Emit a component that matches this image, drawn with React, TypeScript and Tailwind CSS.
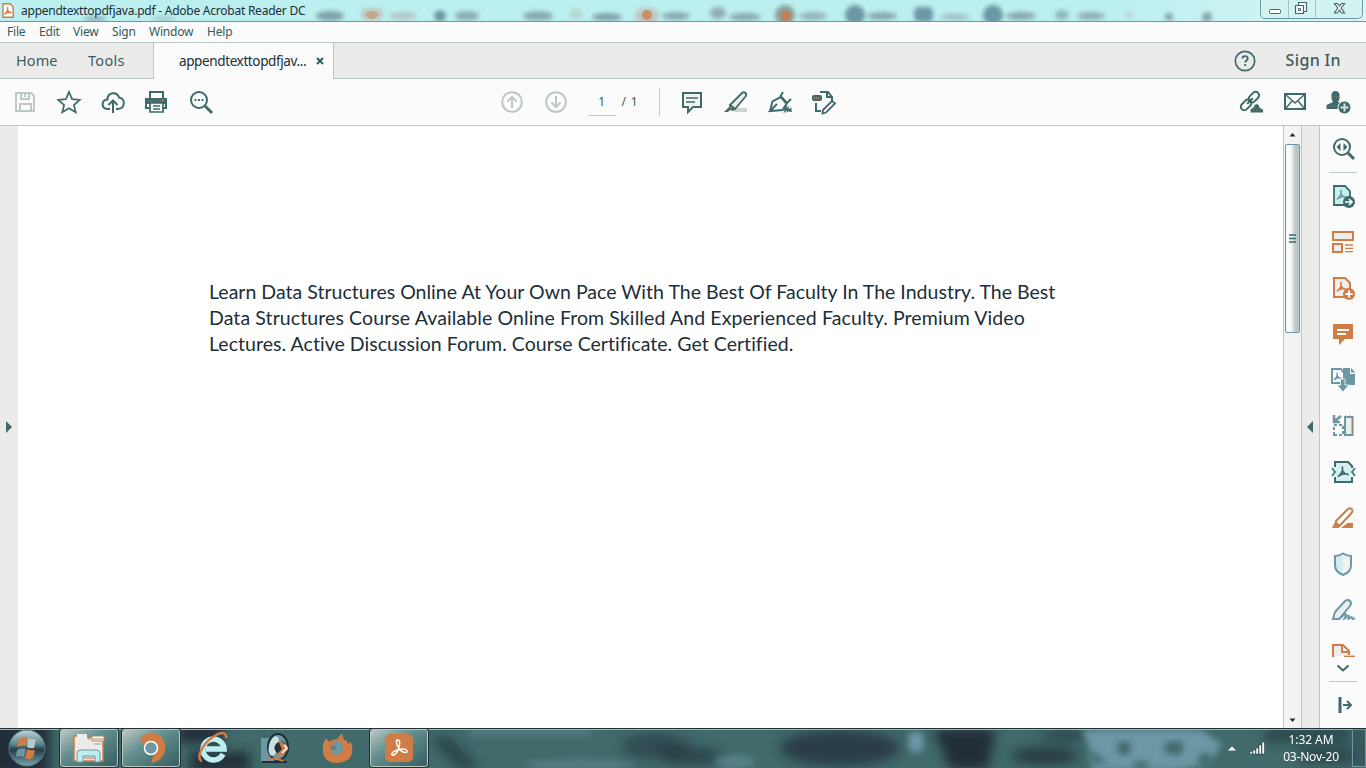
import type { ReactNode } from "react";

function Icon({ children, h = 24, w = 24, color = "text-[#3f6a6b]" }: { children: ReactNode; h?: number; w?: number; color?: string }) {
  return (
    <svg width={w} height={h} viewBox={`0 0 ${w} ${h}`} fill="none" stroke="currentColor" strokeWidth="2" className={`block shrink-0 overflow-visible ${color}`}>
      {children}
    </svg>
  );
}

const PDF_MARK = "M-.5 -5V-1.500Q-.5 .5 -4.500 4.500M-.5 -1Q1 2 5 2.500M-3 3Q0 1.200 5 2";

function TitleBar() {
  const blobs: [number, number, number, number, string][] = [
    [330, 16, 14, 5, "#7ea1ab"], [403, 16, 14, 4, "#b2c9c7"], [467, 16, 12, 5, "#8dafb6"], [538, 16, 15, 5, "#8aabb3"],
    [576, 14, 6, 5, "#b6d5d2"], [607, 17, 15, 4, "#7fa3ad"], [676, 16, 14, 4, "#8aabb3"], [745, 17, 16, 4, "#8aabb3"],
    [813, 16, 14, 4, "#94b4b9"], [882, 16, 15, 4, "#86a8b1"], [955, 17, 15, 3, "#a0bdc0"], [1021, 16, 15, 4, "#86a8b1"],
    [1091, 16, 14, 4, "#91b1b7"], [1129, 15, 4, 3, "#b8d4d1"], [95, 19, 12, 3, "#8fb6bc"], [163, 19, 12, 3, "#a4cdcf"],
  ];
  return (
    <header className="relative flex h-[22px] shrink-0 items-center overflow-hidden border-b border-[#6c97a5] bg-[#bcefef]">
      <svg width="1366" height="21" className="absolute inset-0">
        <defs>
          <filter id="soft" x="-30%" y="-50%" width="160%" height="200%"><feGaussianBlur stdDeviation="2" /></filter>
          <linearGradient id="glass" x1="0" x2="1"><stop offset="0" stopColor="#fff" stopOpacity="0" /><stop offset="1" stopColor="#fff" stopOpacity=".45" /></linearGradient>
        </defs>
        <rect x="1120" width="246" height="21" fill="url(#glass)" />
        <g filter="url(#soft)">
          {blobs.map(([x, y, rx, ry, c]) => <ellipse key={x} cx={x} cy={y} rx={rx} ry={ry} fill={c} />)}
          <rect x="361" y="8" width="22" height="12" rx="5" fill="#bcc8c4" />
          <circle cx="440" cy="16" r="6" fill="#6c97a5" />
          <ellipse cx="647" cy="16" rx="12" ry="9" fill="#bcc8c4" />
          <ellipse cx="718" cy="13" rx="8" ry="6" fill="#91adb2" />
          <circle cx="785" cy="15" r="10" fill="#8c9b96" />
          <circle cx="855" cy="15" r="10" fill="#6c97a5" />
          <rect x="914" y="7" width="19" height="15" rx="5" fill="#6c97a5" />
          <circle cx="993" cy="15" r="10" fill="#6c97a5" />
          <ellipse cx="1062" cy="15" rx="7" ry="5" fill="#8fb6bf" />
          <circle cx="1169" cy="17" r="4" fill="#84a4ab" />
          <circle cx="1207" cy="17" r="5" fill="#84a4ab" />
        </g>
        <g fill="#cf7c45"><ellipse cx="372" cy="15" rx="6" ry="4" opacity=".45" /><circle cx="647" cy="15" r="5" opacity=".75" /><circle cx="786" cy="16" r="5" opacity=".8" /></g>
      </svg>
      <svg width="12" height="15" viewBox="0 0 12 15" className="relative ml-[2px] shrink-0">
        <path d="M1 .8h7l3.200 3v10.500H1z" fill="#fff" stroke="#cf7c45" strokeWidth="1.400" />
        <path d={PDF_MARK} transform="translate(6 8) scale(.75)" fill="none" stroke="#cf7c45" strokeWidth="1.900" />
      </svg>
      <span className="relative ml-[7px] text-[12px] leading-[20px] tracking-[-0.24px] whitespace-nowrap text-[#202e38]">appendtexttopdfjava.pdf - Adobe Acrobat Reader DC</span>
      <svg width="104" height="21" viewBox="0 0 104 21" className="absolute top-0 right-[2px]" fill="none">
        <path d="M.5 -1v14.500q0 5 5 5h92q5 0 5-5v-14.500" fill="#d3f3f2" stroke="#6c97a5" />
        <path d="M28.500 0v18M55.500 0v18" stroke="#a9bfbf" />
        <rect x="9.500" y="9.500" width="11" height="4" rx="1" fill="#fff" stroke="#3f6a6b" />
        <path d="M38.500 2.500h8v9h-8z" fill="#fff" stroke="#3f6a6b" strokeWidth="1.200" /><path d="M35.500 5.500h8v8h-8z" fill="#fff" stroke="#3f6a6b" strokeWidth="1.200" /><path d="M38.500 8.500h2v2h-2z" stroke="#3f6a6b" />
        <path d="M74.500 3.500h3l2 2.500 2-2.500h3l-3.300 4.500 3.300 5h-3l-2-3-2 3h-3l3.300-5z" fill="#fff" stroke="#3f6a6b" strokeWidth="1.200" />
      </svg>
    </header>
  );
}

function MenuBar() {
  return (
    <nav className="flex h-[21px] shrink-0 items-center border-b border-[#bcc8c4] bg-[#fbfbfb] pl-[7px] text-[12px] leading-[20px] tracking-[-0.2px] text-[#315c60]">
      <span className="w-8">File</span><span className="w-[34px]">Edit</span><span className="w-[39px]">View</span>
      <span className="w-[37px]">Sign</span><span className="w-[58px]">Window</span><span>Help</span>
    </nav>
  );
}

function TabBar() {
  return (
    <div className="flex h-9 shrink-0 bg-[#ebebe9] text-[14px] text-[#3f5a5f]">
      <div className="flex w-[153px] items-center border-b border-[#bcc8c4] pl-4"><span className="w-[72px] text-[14.500px] tracking-[0.1px]">Home</span><span className="text-[14.500px] tracking-[0.3px]">Tools</span></div>
      <div className="flex w-[181px] items-center border-x border-[#bcc8c4] bg-[#fbfbfb] pl-[25px] text-[#202e38]">
        <span className="w-[137px] text-[13.500px] whitespace-nowrap tracking-[-0.38px]">appendtexttopdfjav...</span>
        <svg width="8" height="8" viewBox="0 0 8 8" className="mb-px"><path d="m1 1 6 6m0-6-6 6" stroke="#315c60" strokeWidth="2" /></svg>
      </div>
      <div className="flex flex-1 items-center justify-end border-b border-[#bcc8c4] pr-[25px]">
        <svg width="22" height="22" viewBox="0 0 22 22" fill="none" stroke="#3f6a6b"><circle cx="11" cy="11" r="9.700" strokeWidth="1.700" /><path d="M8.500 8.500c0-3.200 5.200-3.200 5.200 0 0 2-2.500 1.800-2.500 4M11.200 14v2" strokeWidth="1.900" /></svg>
        <span className="ml-[30px] pb-px text-[16px] font-medium tracking-[0.35px]">Sign In</span>
      </div>
    </div>
  );
}

function Toolbar() {
  return (
    <div className="flex h-[47px] shrink-0 items-center justify-between border-b border-[#bcc8c4] bg-[#fbfbfb] pr-[15px] pl-[13px]">
      <div className="flex w-[487px] gap-5">
        <Icon color="text-[#bcc8c4]"><path d="M3 3h15l3 3v15H3zM8 3v6h8V3M12 3v4M7 21v-7h11v7" /></Icon>
        <Icon><path d="m12 2 3.100 7.200 7.600.8-5.800 5 1.800 7.300L12 18.300l-6.700 4L7.100 15l-5.800-5 7.600-.8z" strokeWidth="1.700" /></Icon>
        <Icon><path d="M9 19H6.500c-6.500-.5-6.500-9 0-9.500 0-7.500 9.500-8.500 11.500-2 6.500.5 6.500 11-1 11.500H15M12 23V11M7.500 15 12 10.500l4.500 4.500" /></Icon>
        <div className="-ml-px mr-px"><Icon><path d="M6 8V2h13v6M6 18H2V9h20v9h-3" /><path d="M2 8h20v6H2z" fill="currentColor" stroke="none" /><path d="M4 11h13" stroke="#a97455" strokeWidth="1" strokeDasharray="1 2" /><path d="M6 13h13v9H6zM9 16h7M9 19h7" fill="#fff" strokeWidth="1.700" /><path d="M18 10h2" stroke="#cf7c45" /></Icon></div>
        <Icon><circle cx="10" cy="10" r="8" /><path d="m16 16 7 7" strokeWidth="2.800" /><path d="M5.500 10h2m1.500 0h2m1.500 0h2" /></Icon>
      </div>
      <div className="flex w-[336px] items-center">
        <Icon color="text-[#bcc8c4]"><circle cx="12" cy="12" r="9.800" /><path d="M12 18V7M7.500 11.500 12 7l4.500 4.500" /></Icon>
        <div className="ml-5"><Icon color="text-[#bcc8c4]"><circle cx="12" cy="12" r="9.800" /><path d="M12 6v11m-4.500-4.500L12 17l4.500-4.500" /></Icon></div>
        <div className="ml-5 flex h-7 w-7 items-center justify-center border-b border-[#bcc8c4] text-[12px] text-[#315c60]">1</div>
        <div className="ml-[6px] w-[38px] text-[12px] tracking-[0.8px] text-[#315c60]">/ 1</div>
        <div className="h-7 w-px bg-[#bcc8c4]" />
        <div className="ml-5 flex gap-5">
          <Icon><path d="M3 3h18v14h-8l-5 5v-5H3z" fill="#f2f2f1" /><path d="M6 8h12M6 12h9" strokeWidth="1.400" /></Icon>
          <Icon><path d="M12 18h11v4H10z" fill="#ccd4d0" stroke="none" /><path d="m6 15 12-12q2-1.500 3.500 0t0 3.500L11 19z" fill="#eceeec" strokeWidth="1.800" /><path d="m6 14 6 5-3 2-3-1-2 2H0l5-5z" fill="currentColor" stroke="none" /><circle cx="7" cy="18" r="1" fill="#cf7c45" stroke="none" /></Icon>
          <Icon><path d="M2 21 4.500 11.500 13 7l6 6-4.500 7L2 21l7-7M12 7l3-5m3 12 5-5" strokeWidth="1.900" fill="none" /><path d="m13 7 3 3 2 3" strokeWidth="2.500" /><path d="m15 20 3-3-1 4 3-3-.5 3 3-2-.5 2h2" strokeWidth="1.600" /></Icon>
          <Icon><path d="M8 2h8l4 5v4M15 2v5h5M4 13v8h5" /><rect x="0" y="5" width="10" height="6" rx="2" fill="currentColor" stroke="none" /><path d="M2 8h6" stroke="#cf7c45" strokeDasharray="1 1" /><path d="m11 20 9-9 3 2.500-9 9-3.500 1z" fill="#fff" strokeWidth="1.800" /></Icon>
        </div>
      </div>
      <div className="flex flex-1 justify-end gap-[20px]">
        <Icon><g transform="rotate(-45 11 11)"><rect x="-.5" y="7.500" width="12" height="7" rx="3.500" /><rect x="10.500" y="7.500" width="12" height="7" rx="3.500" /><path d="M7 11h8" /></g><path d="M11 23v-4l3-1.500c1.500-5 6-5 7 0l3.500 2V23z" fill="currentColor" stroke="#fbfbfb" strokeWidth="1" /><path d="M14 20h9M16 18h5" stroke="#bd7043" strokeWidth="1" strokeDasharray="1 2" /></Icon>
        <Icon><path d="M2 4h20v15H2z" /><path d="m3 5 9 8 9-8M3 18l6-7m12 7-6-7" strokeWidth="1.400" /></Icon>
        <Icon><path d="M-.5 19v-4l6.500-3-1.500-3V4q1-3 4-3t4 3v5L11 12l3 1-2 6z" fill="currentColor" stroke="none" /><path d="M2 16h8M6 7h5" stroke="#bd7043" strokeWidth="1" strokeDasharray="1 2" /><circle cx="17.500" cy="17.500" r="6.500" fill="currentColor" stroke="#fbfbfb" strokeWidth="1" /><path d="M17.500 13.500v8m-4-4h8" stroke="#d5e2df" /></Icon>
      </div>
    </div>
  );
}

const orange = "text-[#cf7c45]";
const blue = "text-[#6c97a5]";

function ToolPane() {
  return (
    <aside className="flex w-[47px] shrink-0 flex-col items-center border-l border-[#bcc8c4] bg-[#fbfbfb] pt-[11px] pr-px">
      <Icon><circle cx="11" cy="10" r="8" /><path d="m17 16 6 6" strokeWidth="3" /><path d="m9.500 6-4 4 4 4zm3 0 4 4-4 4z" fill="currentColor" stroke="none" /></Icon>
      <div className="my-[11px] h-px w-7 shrink-0 bg-[#bcc8c4]" />
      <div className="flex flex-col gap-[22px]">
        <Icon><path d="M14 21H3V2h11l5 5v6" fill="#c6efee" strokeWidth="1.800" /><path d={PDF_MARK} transform="translate(10.500 11)" stroke="#6c97a5" strokeWidth="1.600" /><circle cx="18" cy="18" r="6" fill="currentColor" stroke="none" /><path d="M14 18h7m-3-3 3 3-3 3" stroke="#fff" strokeWidth="1.700" /></Icon>
        <Icon color={orange}><path d="M2 2h20v8H2zM2 14h9v8H2z" fill="#ededeb" /><path d="M14 15h8m-8 3.300h8m-8 3.400h8" strokeWidth="1.300" /></Icon>
        <Icon color={orange}><path d="M14 21H3V2h11l5 5v6" fill="#f1efed" /><path d={PDF_MARK} transform="translate(10.500 11)" strokeWidth="1.600" /><circle cx="18" cy="18" r="6" fill="currentColor" stroke="none" /><path d="M18 14.500v7M14.500 18h7" stroke="#fff" /></Icon>
        <Icon color={orange}><path d="M2 2h20v15h-8l-6 6v-6H2z" fill="currentColor" stroke="none" /><path d="M6 8h12M6 12h9" stroke="#fff" /></Icon>
        <Icon color={blue}><path d="M12 0h7v6h5v11h-9l-3-3z" fill="currentColor" stroke="none" /><path d="M20 0v4.500h4.500z" fill="currentColor" stroke="none" /><path d="M1 1h9l3 4v10H1z" fill="#fff" /><path d={PDF_MARK} transform="translate(6.500 8.500) scale(.75)" strokeWidth="2" /><path d="M9.500 11h4.500v6h4l-6 7-6-7h3.500z" fill="currentColor" stroke="#fbfbfb" strokeWidth=".8" /></Icon>
        <Icon color={blue}><path d="M14 3h7.500v18H14z" fill="#efeeec" /><path d="M3 21V11h9v10z" strokeDasharray="3 2" /><path d="m10 2-6 5M3 1v7h6" strokeWidth="2.500" /><path d="M14 2h8v20M4 4v4" stroke="#c97c4c" strokeDasharray="1 3" strokeWidth="1" /></Icon>
        <Icon><path d="M4 7V2h13l4 4v2M4 17v5h17v-5" fill="#d5f1ef" /><path d="M5 3h11l4 4v14H5z" fill="#d5f1ef" stroke="none" /><path d={PDF_MARK} transform="translate(12 12) scale(1.100)" strokeWidth="1.600" /><path d="m1 8 3 4-3 4M24 8l-3 4 3 4" stroke="#4b7d87" /></Icon>
        <Icon color={orange}><path d="M5 15 17 3q1.500-1.500 3.500 0t0 4L9 19.500l-4-1z" fill="#fff" /><path d="m4.500 15 5 5-2 2H1zm12 2H22v5H10z" fill="currentColor" stroke="none" /></Icon>
        <Icon color={blue}><path d="M12 1.500q4 2.500 8 2.500v9q0 7-8 10-8-3-8-10V4q4 0 8-2.500Z" fill="#d6ecec" /><path d="M12 3q3 2 7 2v8q0 6-7 8z" fill="#f2f2f0" stroke="none" /></Icon>
        <Icon color={blue}><path d="m4 14 10-11q3-2 5 0t0 5L8 21H2z" fill="#edeeec" strokeWidth="1.900" /><path d="m8 21 6-5c2-1 0 4-1 5 1 0 4-5 5-3l-1 3c2 0 3-3 4-2 0 2 0 3 3 1" strokeWidth="1.700" /></Icon>
        <Icon h={13} color={orange}><path d="M2 13V1h10l6 6v4M11 1v7h7" fill="#ededeb" /><path d="M13 12.300h11" strokeWidth="1.400" /></Icon>
      </div>
      <div className="mt-[7px]"><Icon w={14} h={8}><path d="m1.500 1.500 5.500 5 5.500-5" /></Icon></div>
      <div className="mt-[9px] mb-[14px] h-px w-7 shrink-0 bg-[#bcc8c4]" />
      <div className="ml-[5px]"><Icon w={16} h={18}><path d="M3 1v16" strokeWidth="3" /><path d="M6 9h8m-4-4 4 4-4 4" /></Icon></div>
    </aside>
  );
}

function Workspace() {
  return (
    <main className="flex min-h-0 flex-1">
      <div className="flex w-[18px] shrink-0 items-center bg-[#ebebe9] pl-[6px]"><svg width="6" height="12"><path d="m0 0 6 6-6 6z" fill="#3f6a6b" /></svg></div>
      <article className="w-[1265px] shrink-0 bg-white pt-[153px] pl-[191px] font-[Lato,sans-serif] text-[19.500px] leading-[26px] whitespace-nowrap text-[#202e38]">
        <p className="tracking-[0.018px]">Learn Data Structures Online At Your Own Pace With The Best Of Faculty In The Industry. The Best</p>
        <p className="tracking-[0.1px]">Data Structures Course Available Online From Skilled And Experienced Faculty. Premium Video</p>
        <p className="tracking-[0.04px]">Lectures. Active Discussion Forum. Course Certificate. Get Certified.</p>
      </article>
      <div className="flex w-[19px] shrink-0 flex-col items-center border-x border-[#bcc8c4] bg-[#f3f3f2]">
        <svg width="17" height="18"><path d="m5.500 10.500 3-3.500 3 3.500z" fill="#202e38" /></svg>
        <div className="flex h-[189px] w-[15px] items-center justify-center rounded-[2px] border border-[#6c97a5] bg-linear-to-r from-[#f8faf9] from-35% to-[#b8c7c3] to-75%"><svg width="8" height="9"><path d="M0 1h7M0 4.500h7M0 8h7" stroke="#3f6a6b" strokeWidth="1.500" /></svg></div>
        <div className="flex-1" />
        <svg width="17" height="15"><path d="m5.500 5.500 3 3.500 3-3.500z" fill="#202e38" /></svg>
      </div>
      <div className="flex w-[17px] shrink-0 items-center bg-[#ebebe9] pl-[5px]"><svg width="6" height="12"><path d="m6 0-6 6 6 6z" fill="#3f6a6b" /></svg></div>
      <ToolPane />
    </main>
  );
}

function TaskBackdrop() {
  return (
    <svg width="1366" height="40" className="absolute inset-0">
      <defs><filter id="haze" x="-30%" y="-50%" width="160%" height="200%"><feGaussianBlur stdDeviation="6" /></filter><filter id="haze2"><feGaussianBlur stdDeviation="3" /></filter></defs>
      <rect width="1366" height="40" fill="#416b6b" />
      <g filter="url(#haze)" fill="#202e38">
        <path d="M-20-10h70v60h-70zM178-5h45v20h-45zM190 24h60v20h-60z" />
        <path d="m430 10 20 0 30 30h-20z" opacity=".7" /><ellipse cx="655" cy="18" rx="34" ry="13" opacity=".5" /><ellipse cx="690" cy="28" rx="32" ry="9" opacity=".6" />
        <ellipse cx="840" cy="20" rx="60" ry="18" opacity=".75" /><path d="M933 0h63l-8 42h-38z" /><ellipse cx="1045" cy="28" rx="34" ry="9" opacity=".8" /><ellipse cx="1065" cy="7" rx="24" ry="6" opacity=".6" />
        <path d="M1265 0h85v14h-85zM1300 20h55v15h-55z" opacity=".65" />
      </g>
      <g filter="url(#haze2)" fill="#6c97a5"><path d="M1082 2h120l20 15-15 20-30 5h-85q0-20-10-40Z" /><ellipse cx="916" cy="14" rx="8" ry="11" /><ellipse cx="735" cy="34" rx="20" ry="7" opacity=".5" /><ellipse cx="580" cy="37" rx="55" ry="6" opacity=".4" /><path d="M470 0h120v8H470z" opacity=".4" /></g>
      <g filter="url(#haze2)" fill="#416b6b"><circle cx="1124" cy="20" r="7" /><ellipse cx="1174" cy="20" rx="10" ry="7" /><path d="m1088 20 20 15-15 0z" /><circle cx="1205" cy="32" r="7" /><ellipse cx="1141" cy="37" rx="8" ry="4" /></g>
      <path d="M0 1.500h1366" stroke="#9fb5b3" /><path d="M0 .5h1366" stroke="#202e38" />
    </svg>
  );
}

const taskButton = "flex h-[38px] w-[58px] shrink-0 items-center justify-center rounded-[3px] border border-[#bcc8c4] shadow-[0_0_0_1px_#202e38] bg-linear-to-br from-[#bcc8c4] via-[#64908f] via-40% to-[#365f61]";

function Taskbar() {
  return (
    <footer className="relative flex h-10 shrink-0 items-center overflow-hidden pl-[7px]">
      <TaskBackdrop />
      <div className="relative flex items-center">
        <svg width="40" height="40" viewBox="0 0 40 40">
          <defs><linearGradient id="orb" x1="0" y1="0" x2="0" y2="1"><stop stopColor="#c1d6d8" /><stop offset=".4" stopColor="#58838b" /><stop offset=".55" stopColor="#263b45" /><stop offset="1" stopColor="#78a5af" /></linearGradient></defs>
          <circle cx="20" cy="20" r="18" fill="url(#orb)" stroke="#4f7a80" />
          <path d="M12 11q4-3 8-2l-1 9q-4-1-9 1z" fill="#cf7c45" /><path d="M21 10q4 2 8 1l-2 9q-3 1-7-1z" fill="#bcc8c4" /><path d="M10 22q4-3 9-1l-2 8q-4-2-8 0z" fill="#6c97a5" /><path d="M20 21q4 2 8 1l-2 8q-4 2-8 0z" fill="#cf7c45" />
        </svg>
        <div className={`ml-[13px] ${taskButton}`}>
          <svg width="34" height="32" viewBox="0 0 34 32"><path d="M2 4h13l2 3h14v22H2z" fill="#ebebe9" stroke="#cf7c45" strokeWidth="1.500" /><path d="M5 2h10v4H5z" fill="#ebebe9" /><path d="M20 4h12v5H20z" fill="#fff" stroke="#cf7c45" /><path d="M17 7h15M22 12h7" stroke="#bcc8c4" strokeWidth="2" /><path d="M5 30V21q0-3 4-3h15q4 0 4 3v9h-5v-6H11v6z" fill="#bcefef" stroke="#6c97a5" /><path d="M12 26h11" stroke="#cf7c45" /></svg>
        </div>
        <div className={`ml-1 ${taskButton}`}>
          <svg width="32" height="32" viewBox="0 0 32 32"><path d="M4 7Q10 1 17 1q8 1 11 6 4 8 1 15-4 8-13 9l3-9-9-6-4-8z" fill="#cf7c45" /><circle cx="16" cy="16" r="6.500" fill="#6c97a5" stroke="#fff" strokeWidth="1.500" /></svg>
        </div>
        <svg width="34" height="34" viewBox="0 0 34 34" className="ml-[17px]">
          <path d="M26 23a10.500 10.500 0 1 1 1-5H9" fill="none" stroke="#bcefef" strokeWidth="5.500" /><path d="M5 30C-2 28 6 12 16 6c7-5 14-6 13 1" fill="none" stroke="#cf7c45" strokeWidth="2.500" />
        </svg>
        <svg width="30" height="34" viewBox="0 0 30 34" className="ml-[29px]">
          <path d="M1 7h13v23H1z" fill="#6c97a5" /><path d="M2 31h25" stroke="#202e38" strokeWidth="2" /><ellipse cx="18" cy="16" rx="10" ry="13" fill="#6c97a5" stroke="#202e38" strokeWidth="2" /><ellipse cx="14" cy="15" rx="5" ry="10" fill="#c8e0e1" transform="rotate(15 14 15)" /><circle cx="21" cy="17" r="6.500" fill="#202e38" /><path d="m18 9 9 5 1 5-8 7-3-3 5-5-2-4z" fill="#cf7c45" /><path d="m24 14 3 3-5 5" stroke="#fff" fill="none" strokeWidth="1.500" /><path d="M8 29q7-3 15 1" stroke="#cf7c45" fill="none" strokeWidth="2" />
        </svg>
        <svg width="32" height="32" viewBox="0 0 32 32" className="ml-[31px]"><path d="M2 12 5 6l3 4q4-3 8-3l5-6 2 7q3 0 4 4l3-2q5 16-8 20Q5 34 2 21Z" fill="#cf7c45" /><path d="m12 11 5-2 4 2 1 8-6 4q-5 0-6-5l4-1z" fill="#6c97a5" /><path d="m9 13 4 1 3 3-5 1z" fill="#5e8185" /></svg>
        <div className={`ml-[17px] ${taskButton}`}>
          <svg width="28" height="28" viewBox="0 0 28 28"><rect width="28" height="28" rx="5" fill="#cf7c45" /><path d="M13 6c3 0 1.500 8-1 12s-6 4-5 1.500 7-4.500 11-4.500 6 3.500 2 3.500-8-6-8.500-9.500.3-3 1.500-3Z" fill="none" stroke="#fff" strokeWidth="1.500" /></svg>
        </div>
      </div>
      <div className="relative ml-auto flex items-center">
        <svg width="8" height="5"><path d="m0 4.500 4-4 4 4z" fill="#fff" /></svg>
        <svg width="17" height="14" viewBox="0 0 17 14" className="ml-[13px]"><path d="M1 10.500h2.500V13H1zM4 9h2.500v4H4zM7 7h2.500v6H7zM10 4h2.500v9H10zM13 1h2.500v12H13z" fill="#fff" stroke="#202e38" strokeWidth=".5" /></svg>
        <div className="ml-[10px] flex w-[70px] flex-col items-center text-[12px] leading-[17px] whitespace-nowrap tracking-[-0.2px] text-white"><span className="tracking-[-0.05px]">1:32 AM</span><span>03-Nov-20</span></div>
        <div className="ml-[6px] h-[38px] w-[14px] border border-[#6c97a5] bg-[#304c52]/50" />
      </div>
    </footer>
  );
}

export default function App() {
  return (
    <div className="flex h-[768px] w-[1366px] flex-col overflow-hidden bg-white font-['Noto_Sans',sans-serif]">
      <TitleBar />
      <MenuBar />
      <TabBar />
      <Toolbar />
      <Workspace />
      <Taskbar />
    </div>
  );
}
